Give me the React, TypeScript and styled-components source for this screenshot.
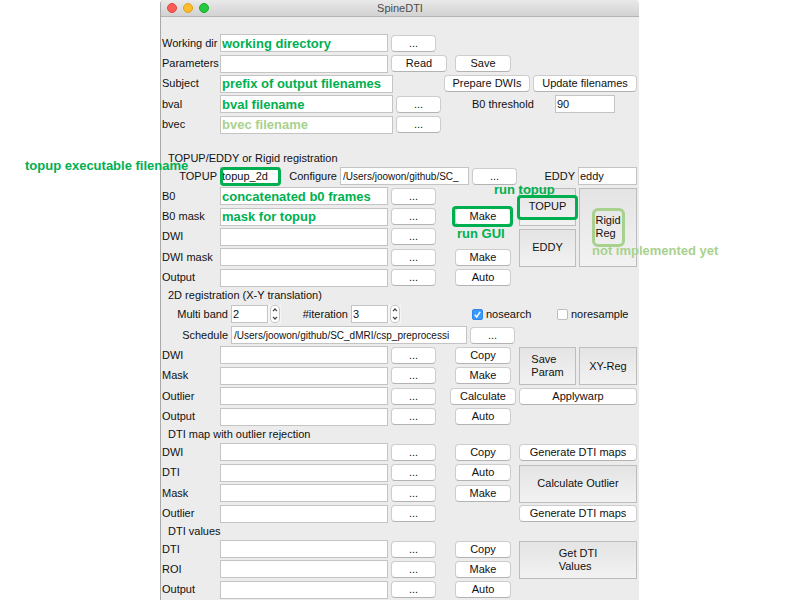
import React from "react";
import styled, { createGlobalStyle, css } from "styled-components";

const GREEN = "#00b050";
const PALE_GREEN = "#a9d18e";

type Tone = "strong" | "pale";
const toneColor = (tone: Tone) => (tone === "pale" ? PALE_GREEN : GREEN);

const noteFont = css`
  font-size: 13px;
  font-weight: 700;
`;

const GlobalStyle = createGlobalStyle`
  * { box-sizing: border-box; }
  body {
    margin: 0;
    background: #fff;
    font-family: "Liberation Sans", Arial, sans-serif;
    font-size: 11px;
    line-height: 13px;
    color: #111;
    overflow-x: hidden;
  }
  button, input { font: inherit; color: inherit; }
`;

const Window = styled.main`
  display: flex;
  flex-direction: column;
  min-height: 100vh;
  min-width: 479px;
  margin: 0 calc(20% + 1px) 0 20%;
  background: #ececec;
  border-left: 1px solid #a9a9a9;
  border-radius: 4px 4px 0 0;
`;

const TitleBar = styled.header`
  display: grid;
  grid-template-columns: 1fr auto 1fr;
  align-items: center;
  height: 17px;
  padding: 0 6px;
  background: linear-gradient(#e9e9e9, #d2d2d2);
  border-bottom: 1px solid #b4b4b4;
  border-radius: 4px 4px 0 0;
`;

const Lights = styled.div`
  display: flex;
  gap: 6px;
`;

const Light = styled.button<{ $fill: string; $edge: string }>`
  width: 10px;
  height: 10px;
  padding: 0;
  border: 1px solid ${(p) => p.$edge};
  border-radius: 50%;
  background: ${(p) => p.$fill};
`;

const Title = styled.h1`
  margin: 0;
  font-size: 11px;
  font-weight: 400;
  color: #4c4c4c;
`;

const Body = styled.form`
  display: flex;
  flex-direction: column;
  padding: 16px 2px 0 1px;
`;

const Rows = styled.section<{ $height: number }>`
  display: grid;
  grid-auto-rows: 1fr;
  min-height: ${(p) => p.$height}px;
`;

const FileGrid = styled(Rows)`
  grid-template-columns: 55px minmax(0, 1fr) 45px 77px 118px;
  column-gap: 3px;
  align-items: center;
`;

const Row = styled.div<{ $height?: number }>`
  position: relative;
  display: flex;
  align-items: center;
  gap: 3px;
  min-height: ${(p) => p.$height ?? 20}px;
`;

const Heading = styled.h2<{ $spaced?: boolean }>`
  margin: ${(p) => (p.$spaced ? "16px" : "0")} 0 0 6px;
  font-size: 11px;
  font-weight: 400;
  line-height: 15px;
`;

const Label = styled.label<{ $width?: number; $right?: boolean }>`
  flex: none;
  width: ${(p) => p.$width ?? 55}px;
  white-space: nowrap;
  text-align: ${(p) => (p.$right ? "right" : "left")};
`;

const Field = styled.input<{ $width?: number; $note?: Tone }>`
  ${(p) => (p.$width ? css`flex: none; width: ${p.$width}px;` : css`flex: 1; width: 100%;`)}
  min-width: 0;
  height: 18px;
  padding: 0 1px;
  border: 1px solid #c4c4c4;
  border-radius: 0;
  background: #fff;
  outline: none;
  ${(p) =>
    p.$note &&
    css`
      ${noteFont}
      color: ${toneColor(p.$note)};
    `}
`;

const PathField = styled(Field)`
  padding: 0 2px;
  font-size: 10px;
`;

const Push = styled.button<{ $width?: number }>`
  flex: none;
  width: ${(p) => (p.$width ? `${p.$width}px` : "100%")};
  height: 17px;
  padding: 0;
  border: 1px solid #cdcdcd;
  border-bottom-color: #b3b3b3;
  border-radius: 4px;
  background: #fff;
  line-height: 15px;
  white-space: nowrap;
`;

const ActionCell = styled.div`
  position: relative;
  display: flex;
  justify-content: center;
  padding-left: 11px;
`;

const Tail = styled.div<{ $width: number; $gap?: number; $end?: boolean }>`
  display: flex;
  flex: none;
  align-items: center;
  width: ${(p) => p.$width}px;
  gap: ${(p) => p.$gap ?? 3}px;
  justify-content: ${(p) => (p.$end ? "flex-end" : "flex-start")};
`;

const SideCell = styled.div<{ $row: string; $split?: boolean }>`
  display: grid;
  grid-column: 5;
  grid-row: ${(p) => p.$row};
  grid-template-columns: ${(p) => (p.$split ? "57px 58px" : "1fr")};
  gap: 3px;
  align-self: stretch;
  align-items: center;
  padding: ${(p) => (p.$row.includes("span") ? "2px 0 1px" : "0")};
`;

const Bevel = styled.button<{ $tall?: boolean }>`
  position: relative;
  display: grid;
  place-content: center;
  grid-row: ${(p) => (p.$tall ? "span 2" : "auto")};
  align-self: stretch;
  padding: 0;
  border: 1px solid #bdbdbd;
  background: linear-gradient(#e4e4e4, #f2f2f2);
  text-align: left;
  white-space: pre-line;
`;

const Outline = styled.span<{ $tone?: Tone; $inset: string }>`
  position: absolute;
  inset: ${(p) => p.$inset};
  border: 3px solid ${(p) => toneColor(p.$tone ?? "strong")};
  border-radius: ${(p) => (p.$tone === "pale" ? 6 : 4)}px;
  pointer-events: none;
`;

const Note = styled.span<{ $tone?: Tone; $left: number; $top: number }>`
  ${noteFont}
  position: absolute;
  z-index: 1;
  left: ${(p) => p.$left}px;
  top: ${(p) => p.$top}px;
  line-height: 15px;
  white-space: nowrap;
  color: ${(p) => toneColor(p.$tone ?? "strong")};
  pointer-events: none;
`;

const Outlined = styled.div`
  position: relative;
  display: flex;
  flex: none;
`;

const SpinBox = styled.div`
  display: flex;
  flex: none;
  align-items: center;
  gap: 2px;
  width: 50px;
  background: #f6f6f6;
`;

const Stepper = styled.div`
  display: flex;
  flex-direction: column;
  width: 10px;
  height: 18px;
  border: 1px solid #c6c6c6;
  border-radius: 4px;
  background: #fff;
  overflow: hidden;
`;

const Step = styled.button`
  display: grid;
  place-items: center;
  flex: 1;
  padding: 0;
  border: 0;
  background: none;
`;

const Checks = styled.div`
  display: grid;
  grid-template-columns: 85px 80px;
  margin-left: auto;
`;

const CheckLabel = styled.label`
  display: flex;
  align-items: center;
  gap: 3px;
`;

const CheckFrame = styled.span`
  position: relative;
  display: flex;
`;

const CheckInput = styled.input`
  appearance: none;
  width: 11px;
  height: 11px;
  margin: 0;
  border: 1px solid #bdbdbd;
  border-radius: 2px;
  background: #fff;
  &:checked {
    border-color: #2f86ee;
    background: #3b99fc;
  }
  &:not(:checked) + svg { display: none; }
`;

const Tick = styled.svg`
  position: absolute;
  inset: 0;
  pointer-events: none;
`;

interface FileRowProps {
  id: string;
  label: string;
  action?: string;
  wide?: boolean;
  value?: string;
  marked?: boolean;
}

function FileRow({ id, label, action, wide, value, marked }: FileRowProps) {
  return (
    <>
      <Label htmlFor={id}>{label}</Label>
      <Field id={id} defaultValue={value} $note={value ? "strong" : undefined} />
      <Push type="button" aria-label={`Browse ${label}`}>...</Push>
      <ActionCell>
        {action && <Push type="button" $width={wide ? 66 : 56}>{action}</Push>}
        {marked && (
          <>
            <Outline $inset="-2px 3px -2px 13px" />
            <Note $left={18} $top={18}>run GUI</Note>
          </>
        )}
      </ActionCell>
    </>
  );
}

function Spin({ id, value }: { id: string; value: string }) {
  return (
    <SpinBox>
      <Field id={id} $width={37} defaultValue={value} inputMode="numeric" />
      <Stepper>
        <Step type="button" aria-label="Increase">
          <svg width="6" height="4" viewBox="0 0 6 4" fill="none" stroke="#444" strokeWidth="1.2">
            <path d="M1 3.2 3 1l2 2.2" />
          </svg>
        </Step>
        <Step type="button" aria-label="Decrease">
          <svg width="6" height="4" viewBox="0 0 6 4" fill="none" stroke="#444" strokeWidth="1.2">
            <path d="M1 .8 3 3 5 .8" />
          </svg>
        </Step>
      </Stepper>
    </SpinBox>
  );
}

function Check({ label, checked }: { label: string; checked?: boolean }) {
  return (
    <CheckLabel>
      <CheckFrame>
        <CheckInput type="checkbox" defaultChecked={checked} />
        <Tick width="11" height="11" viewBox="0 0 11 11" fill="none" stroke="#fff" strokeWidth="1.4">
          <path d="M2.8 5.8 4.7 8 8.2 2.8" />
        </Tick>
      </CheckFrame>
      {label}
    </CheckLabel>
  );
}

export default function App() {
  return (
    <>
      <GlobalStyle />
      <Window>
        <TitleBar>
          <Lights>
            <Light aria-label="Close" $fill="#fc5b57" $edge="#e2463f" />
            <Light aria-label="Minimize" $fill="#fdbc2e" $edge="#e1a116" />
            <Light aria-label="Zoom" $fill="#27c83f" $edge="#12ac28" />
          </Lights>
          <Title>SpineDTI</Title>
        </TitleBar>
        <Body>
          <Rows $height={102}>
            <Row>
              <Label htmlFor="workdir">Working dir</Label>
              <Field id="workdir" $note="strong" defaultValue="working directory" />
              <Tail $width={246}>
                <Push type="button" $width={45}>...</Push>
              </Tail>
            </Row>
            <Row>
              <Label htmlFor="params">Parameters</Label>
              <Field id="params" />
              <Tail $width={246} $gap={8}>
                <Push type="button" $width={56}>Read</Push>
                <Push type="button" $width={56}>Save</Push>
              </Tail>
            </Row>
            <Row>
              <Label htmlFor="subject">Subject</Label>
              <Field id="subject" $note="strong" defaultValue="prefix of output filenames" />
              <Tail $width={241} $end>
                <Push type="button" $width={86}>Prepare DWIs</Push>
                <Push type="button" $width={104}>Update filenames</Push>
              </Tail>
            </Row>
            <Row>
              <Label htmlFor="bval">bval</Label>
              <Field id="bval" $note="strong" defaultValue="bval filename" />
              <Tail $width={241} $gap={31}>
                <Push type="button" $width={45}>...</Push>
                <Tail $width={143}>
                  <Label htmlFor="threshold" $width={80}>B0 threshold</Label>
                  <Field id="threshold" $width={60} defaultValue="90" />
                </Tail>
              </Tail>
            </Row>
            <Row>
              <Label htmlFor="bvec">bvec</Label>
              <Field id="bvec" $note="pale" defaultValue="bvec filename" />
              <Tail $width={241}>
                <Push type="button" $width={45}>...</Push>
              </Tail>
            </Row>
          </Rows>

          <Heading $spaced>TOPUP/EDDY or Rigid registration</Heading>
          <Row>
            <Note $left={-137} $top={-8}>topup executable filename</Note>
            <Label htmlFor="topup" $right>TOPUP</Label>
            <Outlined>
              <Field id="topup" $width={60} defaultValue="topup_2d" />
              <Outline $inset="0 -1px -1px 0" />
            </Outlined>
            <Label htmlFor="configure" $width={54} $right>Configure</Label>
            <PathField id="configure" defaultValue="/Users/joowon/github/SC_" />
            <Push type="button" $width={45}>...</Push>
            <Label htmlFor="eddy" $width={55} $right>EDDY</Label>
            <Field id="eddy" $width={59} defaultValue="eddy" />
          </Row>
          <FileGrid $height={102}>
            <SideCell $row="1 / span 4" $split>
              <Bevel type="button">
                TOPUP
                <Outline $inset="6px -3px 5px -3px" />
                <Note $left={-26} $top={-7}>run topup</Note>
              </Bevel>
              <Bevel type="button" $tall>
                {"Rigid\nReg"}
                <Outline $tone="pale" $inset="19px 11px 19px 12px" />
                <Note $tone="pale" $left={12} $top={54}>not implemented yet</Note>
              </Bevel>
              <Bevel type="button">EDDY</Bevel>
            </SideCell>
            <FileRow id="t-b0" label="B0" value="concatenated b0 frames" />
            <FileRow id="t-b0mask" label="B0 mask" value="mask for topup" action="Make" marked />
            <FileRow id="t-dwi" label="DWI" />
            <FileRow id="t-dwimask" label="DWI mask" action="Make" />
            <FileRow id="t-output" label="Output" action="Auto" />
          </FileGrid>

          <Heading>2D registration (X-Y translation)</Heading>
          <Row $height={22}>
            <Label htmlFor="band" $width={66} $right>Multi band</Label>
            <Spin id="band" value="2" />
            <Label htmlFor="iteration" $width={64} $right>#iteration</Label>
            <Spin id="iteration" value="3" />
            <Checks>
              <Check label="nosearch" checked />
              <Check label="noresample" />
            </Checks>
          </Row>
          <Row>
            <Label htmlFor="schedule" $width={66} $right>Schedule</Label>
            <PathField id="schedule" defaultValue="/Users/joowon/github/SC_dMRI/csp_preprocessi" />
            <Tail $width={167}>
              <Push type="button" $width={45}>...</Push>
            </Tail>
          </Row>
          <FileGrid $height={82}>
            <SideCell $row="1 / span 2" $split>
              <Bevel type="button">{"Save\nParam"}</Bevel>
              <Bevel type="button">XY-Reg</Bevel>
            </SideCell>
            <SideCell $row="3">
              <Push type="button">Applywarp</Push>
            </SideCell>
            <FileRow id="r-dwi" label="DWI" action="Copy" />
            <FileRow id="r-mask" label="Mask" action="Make" />
            <FileRow id="r-outlier" label="Outlier" action="Calculate" wide />
            <FileRow id="r-output" label="Output" action="Auto" />
          </FileGrid>

          <Heading>DTI map with outlier rejection</Heading>
          <FileGrid $height={82}>
            <SideCell $row="1">
              <Push type="button">Generate DTI maps</Push>
            </SideCell>
            <SideCell $row="2 / span 2">
              <Bevel type="button">Calculate Outlier</Bevel>
            </SideCell>
            <SideCell $row="4">
              <Push type="button">Generate DTI maps</Push>
            </SideCell>
            <FileRow id="m-dwi" label="DWI" action="Copy" />
            <FileRow id="m-dti" label="DTI" action="Auto" />
            <FileRow id="m-mask" label="Mask" action="Make" />
            <FileRow id="m-outlier" label="Outlier" />
          </FileGrid>

          <Heading>DTI values</Heading>
          <FileGrid $height={61}>
            <SideCell $row="1 / span 2">
              <Bevel type="button">{"Get DTI\nValues"}</Bevel>
            </SideCell>
            <FileRow id="v-dti" label="DTI" action="Copy" />
            <FileRow id="v-roi" label="ROI" action="Make" />
            <FileRow id="v-output" label="Output" action="Auto" />
          </FileGrid>
        </Body>
      </Window>
    </>
  );
}
